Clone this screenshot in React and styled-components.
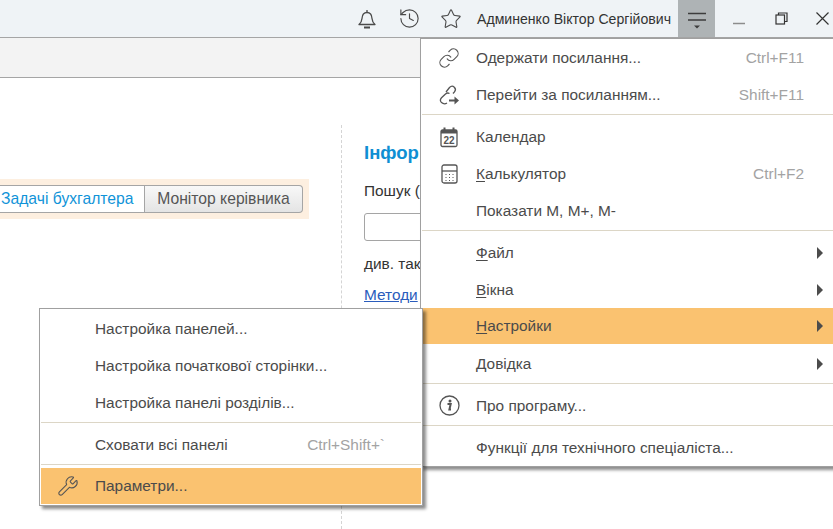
import styled, { createGlobalStyle } from "styled-components"
import { History, Link, Star, Wrench } from "lucide-react"

const Global = createGlobalStyle`
html, body {
    margin: 0;
    padding: 0;
    background: #fff;
}
body {
    font-family: "Liberation Sans", Arial, sans-serif;
}
`
const Pagina = styled.div`
position: relative;
width: 833px;
height: 529px;
overflow: hidden;
background: #fff;
display: flex;
flex-direction: column;
`
const BarraSuperior = styled.div`
height: 38px;
box-sizing: border-box;
flex: none;
display: flex;
align-items: stretch;
justify-content: flex-end;
background: #eff3f6;
border-bottom: 1px solid #a5a5a5;
`
const BotonIcono = styled.div`
width: 42px;
flex: none;
display: flex;
align-items: center;
justify-content: center;
color: #4a4a4a;
`
const NombreUsuario = styled.div`
display: flex;
align-items: center;
margin: 0 7px 0 5px;
font-size: 14.1px;
color: #333;
white-space: nowrap;
`
const BotonMenu = styled.div`
width: 37px;
flex: none;
background: #aeb3b5;
display: flex;
align-items: center;
justify-content: center;
`
const BotonVentana = styled.div`
width: ${p => p.$ancho || 42}px;
flex: none;
padding-left: ${p => p.$izq || 0}px;
box-sizing: border-box;
display: flex;
align-items: center;
justify-content: center;
`
const BarraPestanas = styled.div`
height: 40px;
box-sizing: border-box;
flex: none;
background: #f3f3f3;
border-bottom: 1px solid #a5a5a5;
`
const Contenido = styled.div`
flex: 1;
display: flex;
padding-top: 47px;
min-height: 0;
`
const ColumnaIzquierda = styled.div`
width: 342px;
flex: none;
box-sizing: border-box;
border-right: 1px dashed #d4d4d4;
padding-top: 54px;
`
const Franja = styled.div`
width: 309px;
height: 40px;
box-sizing: border-box;
background: #fdefe0;
padding-top: 6px;
display: flex;
align-items: flex-start;
`
const Pestana = styled.div`
height: 28px;
box-sizing: border-box;
display: flex;
align-items: center;
font-size: 15.7px;
white-space: nowrap;
`
const PestanaInactiva = styled(Pestana)`
width: 145px;
padding-left: 1px;
background: #fff;
color: #0f93d8;
border: 1px solid #a5a5a5;
border-left: none;
`
const PestanaActiva = styled(Pestana)`
width: 158px;
justify-content: center;
color: #555;
background: linear-gradient(#f8f8f8, #e4e4e4);
border: 1px solid #a5a5a5;
border-left: none;
border-radius: 0 4px 4px 0;
`
const ColumnaDerecha = styled.div`
padding: 17px 0 0 22px;
flex: 1;
min-width: 0;
`
const TituloInfo = styled.div`
font-size: 18.5px;
font-weight: bold;
color: #0f8fd3;
line-height: 21px;
white-space: nowrap;
`
const TextoInfo = styled.div`
font-size: 15.4px;
color: #333;
line-height: 18px;
margin-top: ${p => p.$arriba}px;
white-space: nowrap;
`
const CampoBusqueda = styled.div`
width: 120px;
height: 28px;
box-sizing: border-box;
margin-top: 13px;
border: 1px solid #a5a5a5;
border-radius: 3px;
background: #fff;
`
const EnlaceInfo = styled.a`
display: inline-block;
font-size: 15.4px;
line-height: 18px;
margin-top: 13px;
color: #2a5cbc;
text-decoration: underline;
white-space: nowrap;
`
const Menu = styled.div`
position: absolute;
box-sizing: border-box;
background: #fff;
border: 1px solid #a0a0a0;
box-shadow: 3px 3px 3px rgba(0, 0, 0, 0.45);
padding: 1px;
`
const MenuPrincipal = styled(Menu)`
left: 420px;
top: 38px;
width: 430px;
height: 429px;
padding: 0 0 0 1px;
`
const SubMenu = styled(Menu)`
left: 39px;
top: 308px;
width: 384px;
height: 198px;
`
const Fila = styled.div`
position: relative;
height: ${p => (p.$activa ? 36 : 37)}px;
margin-bottom: ${p => (p.$activa ? 1 : 0)}px;
display: flex;
align-items: center;
background: ${p => (p.$activa ? "#fac270" : "transparent")};
color: #4b4b4b;
font-size: 15.4px;
white-space: nowrap;
`
const FilaIcono = styled.div`
width: ${p => p.$ancho}px;
flex: none;
display: flex;
justify-content: center;
color: #555;
`
const Atajo = styled.div`
position: absolute;
top: 0;
bottom: 0;
right: ${p => p.$derecha}px;
display: flex;
align-items: center;
color: #a3a3a3;
`
const Flecha = styled.div`
position: absolute;
left: 395px;
top: 50%;
margin-top: -6px;
width: 0;
height: 0;
border-style: solid;
border-width: 6px 0 6px 6px;
border-color: transparent transparent transparent #4c4c4c;
`
const Separador = styled.div`
height: 1px;
margin: 1px 0 3px;
background: #dcd6c6;
`
const Tecla = styled.span`
text-decoration: underline;
text-underline-offset: 2px;
`

const Campana = () => (
    <svg width="20" height="22" viewBox="0 0 20 22" fill="none" stroke="#4a4a4a" strokeWidth="1.3">
        <path d="M2 16.5h16c-1.8-1.6-2.8-3-3-6-.2-3.600-2-6-5-6s-4.800 2.400-5 6c-.2 3-1.200 4.400-3 6z" strokeLinejoin="round" />
        <path d="M10 4.500V2" />
        <path d="M7 19.500h6" strokeWidth="2" />
    </svg>
)
const IconoMenu = () => (
    <svg width="20" height="20" viewBox="0 0 20 20">
        <path d="M1 4.500h18M1 11h18" stroke="#3d3d3d" strokeWidth="1.300" />
        <path d="M7 16.500h6l-3 3z" fill="#3d3d3d" />
    </svg>
)
const Minimizar = () => (
    <svg width="12" height="12" viewBox="0 0 12 12">
        <path d="M0 10.500h12" stroke="#8c8c8c" strokeWidth="1.500" />
    </svg>
)
const Restaurar = () => (
    <svg width="13" height="13" viewBox="0 0 13 13" fill="none" stroke="#333" strokeWidth="1.200">
        <rect x="1" y="3" width="8.500" height="9" />
        <path d="M3.500 3V1h8.500v8.500h-2.500" />
    </svg>
)
const Cerrar = () => (
    <svg width="13" height="13" viewBox="0 0 13 13" stroke="#333" strokeWidth="1.200">
        <path d="M.5.500l12 12M12.500.500l-12 12" />
    </svg>
)
const EnlaceFlecha = () => (
    <svg width="22" height="22" viewBox="0 0 22 22" fill="none" stroke="#555" strokeWidth="1.300">
        <path d="M8 8l3.500-4.500c1.500-1.500 3.500-1.500 4.800-.3 1.300 1.300 1.300 3.300.2 4.600L15 9.500" />
        <path d="M9 19c-2 1.300-4 .8-5.500-.4-1.300-1.300-1.300-3.300 0-4.800L7.500 10c1-1 2.500-1.300 4-.5" />
        <path d="M11 16.500h7" strokeWidth="2" />
        <path d="M16.500 12.500l4.500 4-4.500 4z" fill="#555" stroke="none" />
    </svg>
)
const Calendario = () => (
    <svg width="18" height="22" viewBox="0 0 18 22" fill="none">
        <rect x="1" y="4" width="16" height="16.500" rx="1.500" stroke="#555" strokeWidth="1.300" />
        <path d="M1 4h16v3.500H1z" fill="#555" />
        <path d="M4.500 1.500v3M13.500 1.500v3" stroke="#555" strokeWidth="2" />
        <text x="9" y="18" textAnchor="middle" fontSize="10" fontWeight="bold" fontFamily="Liberation Sans" fill="#555">22</text>
    </svg>
)
const Calculadora = () => (
    <svg width="17" height="20" viewBox="0 0 17 20" fill="none" stroke="#555">
        <rect x="1" y="1" width="15" height="18" rx="2" strokeWidth="1.300" />
        <path d="M1 7h15" strokeWidth="1.300" />
        <path d="M4.500 10.500h1M8 10.500h1M11.500 10.500h1M4.500 13.500h1M8 13.500h1M11.500 13.500h1M4.500 16.500h1M8 16.500h1M11.500 16.500h1" strokeWidth="1.200" />
    </svg>
)
const Informacion = () => (
    <svg width="21" height="21" viewBox="0 0 21 21" fill="none">
        <circle cx="10.500" cy="10.500" r="9.500" stroke="#555" strokeWidth="1.300" />
        <circle cx="11" cy="6" r="1.500" fill="#555" />
        <path d="M8.500 9h3.200l-1.300 5.500h1.600" stroke="#555" strokeWidth="2" />
    </svg>
)

const App = () => {
    return (
        <Pagina>
            <Global />
            <BarraSuperior>
                <BotonIcono><Campana /></BotonIcono>
                <BotonIcono><History size={23} strokeWidth={1.2} /></BotonIcono>
                <BotonIcono><Star size={22} strokeWidth={1.2} /></BotonIcono>
                <NombreUsuario>Админенко Віктор Сергійович</NombreUsuario>
                <BotonMenu><IconoMenu /></BotonMenu>
                <BotonVentana $ancho={45} $izq={3}><Minimizar /></BotonVentana>
                <BotonVentana><Restaurar /></BotonVentana>
                <BotonVentana $ancho={31} $izq={9}><Cerrar /></BotonVentana>
            </BarraSuperior>
            <BarraPestanas />
            <Contenido>
                <ColumnaIzquierda>
                    <Franja>
                        <PestanaInactiva>Задачі бухгалтера</PestanaInactiva>
                        <PestanaActiva>Монітор керівника</PestanaActiva>
                    </Franja>
                </ColumnaIzquierda>
                <ColumnaDerecha>
                    <TituloInfo>Інфор</TituloInfo>
                    <TextoInfo $arriba={19}>Пошук (:</TextoInfo>
                    <CampoBusqueda />
                    <TextoInfo $arriba={14}>див. так</TextoInfo>
                    <EnlaceInfo>Методи</EnlaceInfo>
                </ColumnaDerecha>
            </Contenido>
            <MenuPrincipal>
                <Fila>
                    <FilaIcono $ancho={54}><Link size={22} strokeWidth={1.2} /></FilaIcono>
                    Одержати посилання...
                    <Atajo $derecha={45}>Ctrl+F11</Atajo>
                </Fila>
                <Fila>
                    <FilaIcono $ancho={54}><EnlaceFlecha /></FilaIcono>
                    Перейти за посиланням...
                    <Atajo $derecha={45}>Shift+F11</Atajo>
                </Fila>
                <Separador />
                <Fila>
                    <FilaIcono $ancho={54}><Calendario /></FilaIcono>
                    <span>Кален<Tecla>д</Tecla>ар</span>
                </Fila>
                <Fila>
                    <FilaIcono $ancho={54}><Calculadora /></FilaIcono>
                    <span><Tecla>К</Tecla>алькулятор</span>
                    <Atajo $derecha={45}>Ctrl+F2</Atajo>
                </Fila>
                <Fila>
                    <FilaIcono $ancho={54} />
                    Показати M, M+, M-
                </Fila>
                <Separador />
                <Fila>
                    <FilaIcono $ancho={54} />
                    <span><Tecla>Ф</Tecla>айл</span>
                    <Flecha />
                </Fila>
                <Fila>
                    <FilaIcono $ancho={54} />
                    <span><Tecla>В</Tecla>ікна</span>
                    <Flecha />
                </Fila>
                <Fila $activa>
                    <FilaIcono $ancho={54} />
                    <span><Tecla>Н</Tecla>астройки</span>
                    <Flecha />
                </Fila>
                <Fila>
                    <FilaIcono $ancho={54} />
                    <span><Tecla>Д</Tecla>овідка</span>
                    <Flecha />
                </Fila>
                <Separador />
                <Fila>
                    <FilaIcono $ancho={54}><Informacion /></FilaIcono>
                    Про програму...
                </Fila>
                <Separador />
                <Fila>
                    <FilaIcono $ancho={54} />
                    Функції для технічного спеціаліста...
                </Fila>
            </MenuPrincipal>
            <SubMenu>
                <Fila>
                    <FilaIcono $ancho={54} />
                    Настройка панелей...
                </Fila>
                <Fila>
                    <FilaIcono $ancho={54} />
                    Настройка початкової сторінки...
                </Fila>
                <Fila>
                    <FilaIcono $ancho={54} />
                    Настройка панелі розділів...
                </Fila>
                <Separador />
                <Fila>
                    <FilaIcono $ancho={54} />
                    Сховати всі панелі
                    <Atajo $derecha={36}>Ctrl+Shift+`</Atajo>
                </Fila>
                <Separador />
                <Fila $activa>
                    <FilaIcono $ancho={54}><Wrench size={22} strokeWidth={1.2} /></FilaIcono>
                    Параметри...
                </Fila>
            </SubMenu>
        </Pagina>
    )
}

export default App
